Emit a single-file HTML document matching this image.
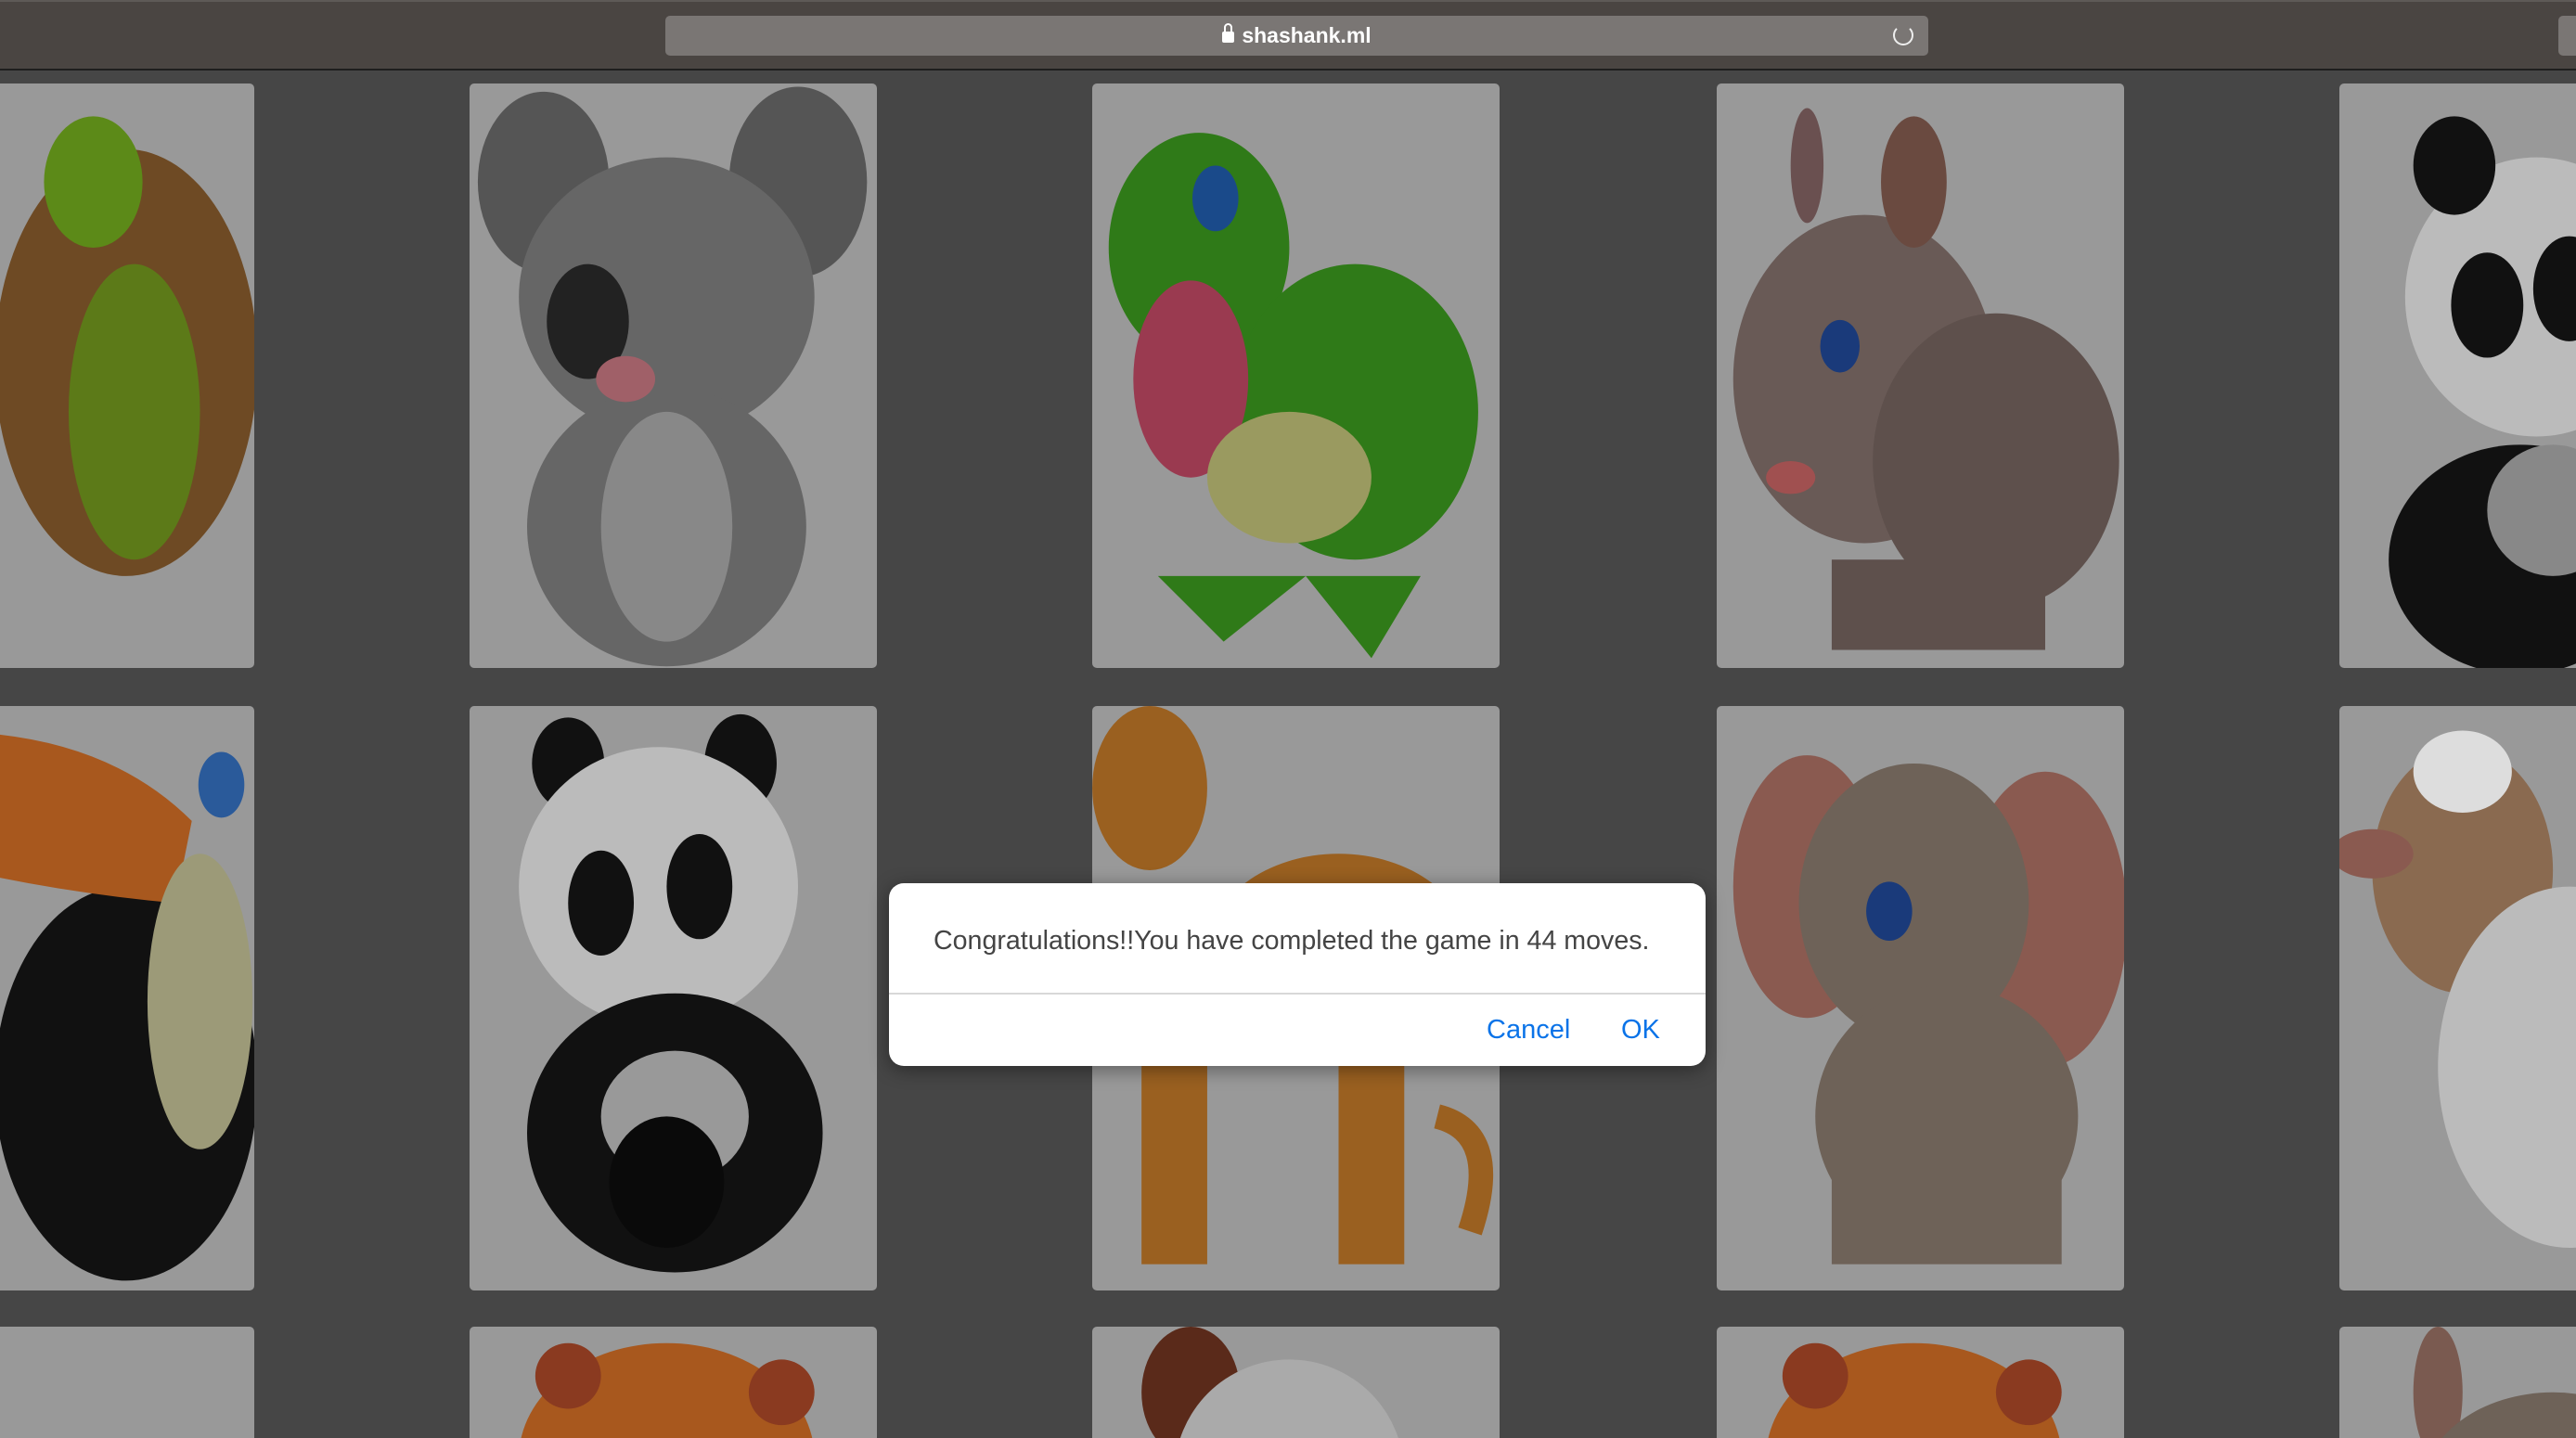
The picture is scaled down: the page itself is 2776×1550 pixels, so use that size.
<!DOCTYPE html>
<html><head><meta charset="utf-8"><style>
html,body{margin:0;padding:0;width:2776px;height:1550px;overflow:hidden;background:#464646;font-family:"Liberation Sans",Arial,sans-serif}
#wrap{position:relative;width:2776px;height:1550px;overflow:hidden;background:#464646}
.top{position:absolute;left:0;top:0;width:2776px;height:72px;background:#4a4542;border-bottom:2px solid #1e1e1e;border-top:2px solid #5e5a57}
.url{position:absolute;left:717px;top:15px;width:1361px;height:43px;background:#7a7674;border-radius:5px;color:#fff;font-size:23px;text-align:center;line-height:43px;font-weight:bold}
.url .lk{display:inline-block;width:13px;height:12px;background:#fff;border-radius:2px;margin-right:8px;position:relative;top:0}
.url .lk:before{content:"";position:absolute;left:2px;top:-9px;width:5px;height:8px;border:2px solid #fff;border-bottom:none;border-radius:5px 5px 0 0}
.rl{position:absolute;right:16px;top:10px;width:18px;height:18px;border:2px solid #eee;border-radius:50%;border-top-color:transparent}
.side{position:absolute;left:2757px;top:15px;width:30px;height:43px;background:#7a7674;border-radius:5px}
.card{position:absolute;width:439px;height:630px;background:#999;border-radius:5px;overflow:hidden}
.card svg{width:439px;height:630px;display:block}
.dlg{position:absolute;left:958px;top:952px;width:880px;height:197px;background:#fff;border-radius:16px;box-shadow:0 4px 20px rgba(0,0,0,.4)}
.msg{position:absolute;left:48px;top:46px;font-size:28.6px;color:#444;white-space:nowrap}
.hr{position:absolute;left:0;top:118px;width:100%;height:2px;background:#d8d8d8}
.btn{position:absolute;top:142px;font-size:29px;color:#0a73e8}
</style></head><body><div id="wrap">
<div class="top"><div class="url"><span class="lk"></span>shashank.ml<div class="rl"></div></div><div class="side"></div></div>

<div class="card" style="left:-165px;top:90px"><svg viewBox="0 0 248 356"><ellipse cx="170" cy="170" rx="80" ry="130" fill="#6e4a24"/><ellipse cx="175" cy="200" rx="40" ry="90" fill="#5c7a18"/><ellipse cx="150" cy="60" rx="30" ry="40" fill="#5c8a18"/></svg></div>
<div class="card" style="left:506px;top:90px"><svg viewBox="0 0 248 356"><ellipse cx="45" cy="60" rx="40" ry="55" fill="#555"/><ellipse cx="200" cy="60" rx="42" ry="58" fill="#555"/><ellipse cx="120" cy="130" rx="90" ry="85" fill="#666"/><ellipse cx="120" cy="270" rx="85" ry="85" fill="#666"/><ellipse cx="120" cy="270" rx="40" ry="70" fill="#888"/><ellipse cx="72" cy="145" rx="25" ry="35" fill="#222"/><ellipse cx="95" cy="180" rx="18" ry="14" fill="#a06068"/></svg></div>
<div class="card" style="left:1177px;top:90px"><svg viewBox="0 0 248 356"><ellipse cx="65" cy="100" rx="55" ry="70" fill="#2f7a18"/><ellipse cx="160" cy="200" rx="75" ry="90" fill="#2f7a18"/><ellipse cx="60" cy="180" rx="35" ry="60" fill="#9a3a50"/><ellipse cx="120" cy="240" rx="50" ry="40" fill="#9a9a60"/><ellipse cx="75" cy="70" rx="14" ry="20" fill="#1a4a8a"/><path d="M40 300 L80 340 L130 300 L170 350 L200 300Z" fill="#2f7a18"/></svg></div>
<div class="card" style="left:1850px;top:90px"><svg viewBox="0 0 248 356"><ellipse cx="90" cy="180" rx="80" ry="100" fill="#695a56"/><ellipse cx="170" cy="230" rx="75" ry="90" fill="#5e504c"/><ellipse cx="120" cy="60" rx="20" ry="40" fill="#6a4a40"/><ellipse cx="55" cy="50" rx="10" ry="35" fill="#6a5050"/><ellipse cx="75" cy="160" rx="12" ry="16" fill="#1a3a7a"/><ellipse cx="45" cy="240" rx="15" ry="10" fill="#a05050"/><rect x="70" y="290" width="130" height="55" fill="#5e504c"/></svg></div>
<div class="card" style="left:2521px;top:90px"><svg viewBox="0 0 248 356"><ellipse cx="120" cy="130" rx="80" ry="85" fill="#bbb"/><ellipse cx="70" cy="50" rx="25" ry="30" fill="#111"/><ellipse cx="90" cy="135" rx="22" ry="32" fill="#111"/><ellipse cx="140" cy="125" rx="22" ry="32" fill="#111"/><ellipse cx="110" cy="290" rx="80" ry="70" fill="#111"/><ellipse cx="130" cy="260" rx="40" ry="40" fill="#888"/></svg></div>

<div class="card" style="left:-165px;top:761px"><svg viewBox="0 0 248 356"><ellipse cx="170" cy="230" rx="80" ry="120" fill="#111"/><path d="M0 20 Q140 0 210 70 L200 120 Q90 110 0 80Z" fill="#a8581e"/><ellipse cx="215" cy="180" rx="32" ry="90" fill="#9c9a78"/><ellipse cx="228" cy="48" rx="14" ry="20" fill="#2a5a9a"/></svg></div>
<div class="card" style="left:506px;top:761px"><svg viewBox="0 0 248 356"><ellipse cx="60" cy="35" rx="22" ry="28" fill="#111"/><ellipse cx="165" cy="35" rx="22" ry="30" fill="#111"/><ellipse cx="115" cy="110" rx="85" ry="85" fill="#bbb"/><ellipse cx="80" cy="120" rx="20" ry="32" fill="#111"/><ellipse cx="140" cy="110" rx="20" ry="32" fill="#111"/><ellipse cx="125" cy="260" rx="90" ry="85" fill="#111"/><ellipse cx="125" cy="250" rx="45" ry="40" fill="#999"/><ellipse cx="120" cy="290" rx="35" ry="40" fill="#0a0a0a"/></svg></div>
<div class="card" style="left:1177px;top:761px"><svg viewBox="0 0 248 356"><ellipse cx="35" cy="50" rx="35" ry="50" fill="#9a6020"/><ellipse cx="150" cy="150" rx="80" ry="60" fill="#9a6020"/><rect x="30" y="200" width="40" height="140" fill="#9a6020"/><rect x="150" y="200" width="40" height="140" fill="#9a6020"/><path d="M210 250 Q250 260 230 320" stroke="#9a6020" stroke-width="15" fill="none"/></svg></div>
<div class="card" style="left:1850px;top:761px"><svg viewBox="0 0 248 356"><ellipse cx="55" cy="110" rx="45" ry="80" fill="#8a5a50"/><ellipse cx="200" cy="130" rx="50" ry="90" fill="#8a5a50"/><ellipse cx="120" cy="120" rx="70" ry="85" fill="#6e6258"/><ellipse cx="140" cy="250" rx="80" ry="80" fill="#6e6258"/><ellipse cx="105" cy="125" rx="14" ry="18" fill="#1a3a7a"/><rect x="70" y="260" width="140" height="80" fill="#6e6258"/></svg></div>
<div class="card" style="left:2521px;top:761px"><svg viewBox="0 0 248 356"><ellipse cx="75" cy="100" rx="55" ry="75" fill="#8a6a50"/><ellipse cx="75" cy="40" rx="30" ry="25" fill="#ddd"/><ellipse cx="140" cy="220" rx="80" ry="110" fill="#bbb"/><ellipse cx="20" cy="90" rx="25" ry="15" fill="#8a5a50"/></svg></div>

<div class="card" style="left:-165px;top:1430px"></div>
<div class="card" style="left:506px;top:1430px"><svg viewBox="0 0 248 356"><ellipse cx="120" cy="80" rx="90" ry="70" fill="#a8581e"/><ellipse cx="60" cy="30" rx="20" ry="20" fill="#8a3a20"/><ellipse cx="190" cy="40" rx="20" ry="20" fill="#8a3a20"/></svg></div>
<div class="card" style="left:1177px;top:1430px"><svg viewBox="0 0 248 356"><ellipse cx="60" cy="40" rx="30" ry="40" fill="#5a2a1a"/><ellipse cx="120" cy="90" rx="70" ry="70" fill="#aaa"/></svg></div>
<div class="card" style="left:1850px;top:1430px"><svg viewBox="0 0 248 356"><ellipse cx="120" cy="80" rx="90" ry="70" fill="#a8581e"/><ellipse cx="60" cy="30" rx="20" ry="20" fill="#8a3a20"/><ellipse cx="190" cy="40" rx="20" ry="20" fill="#8a3a20"/></svg></div>
<div class="card" style="left:2521px;top:1430px"><svg viewBox="0 0 248 356"><ellipse cx="60" cy="40" rx="15" ry="40" fill="#7a5a50"/><ellipse cx="130" cy="100" rx="80" ry="60" fill="#6e6258"/></svg></div>

<div class="dlg">
<div class="msg">Congratulations!!You have completed the game in 44 moves.</div>
<div class="hr"></div>
<div class="btn" style="left:644px">Cancel</div>
<div class="btn" style="left:789px">OK</div>
</div>
</div></body></html>
